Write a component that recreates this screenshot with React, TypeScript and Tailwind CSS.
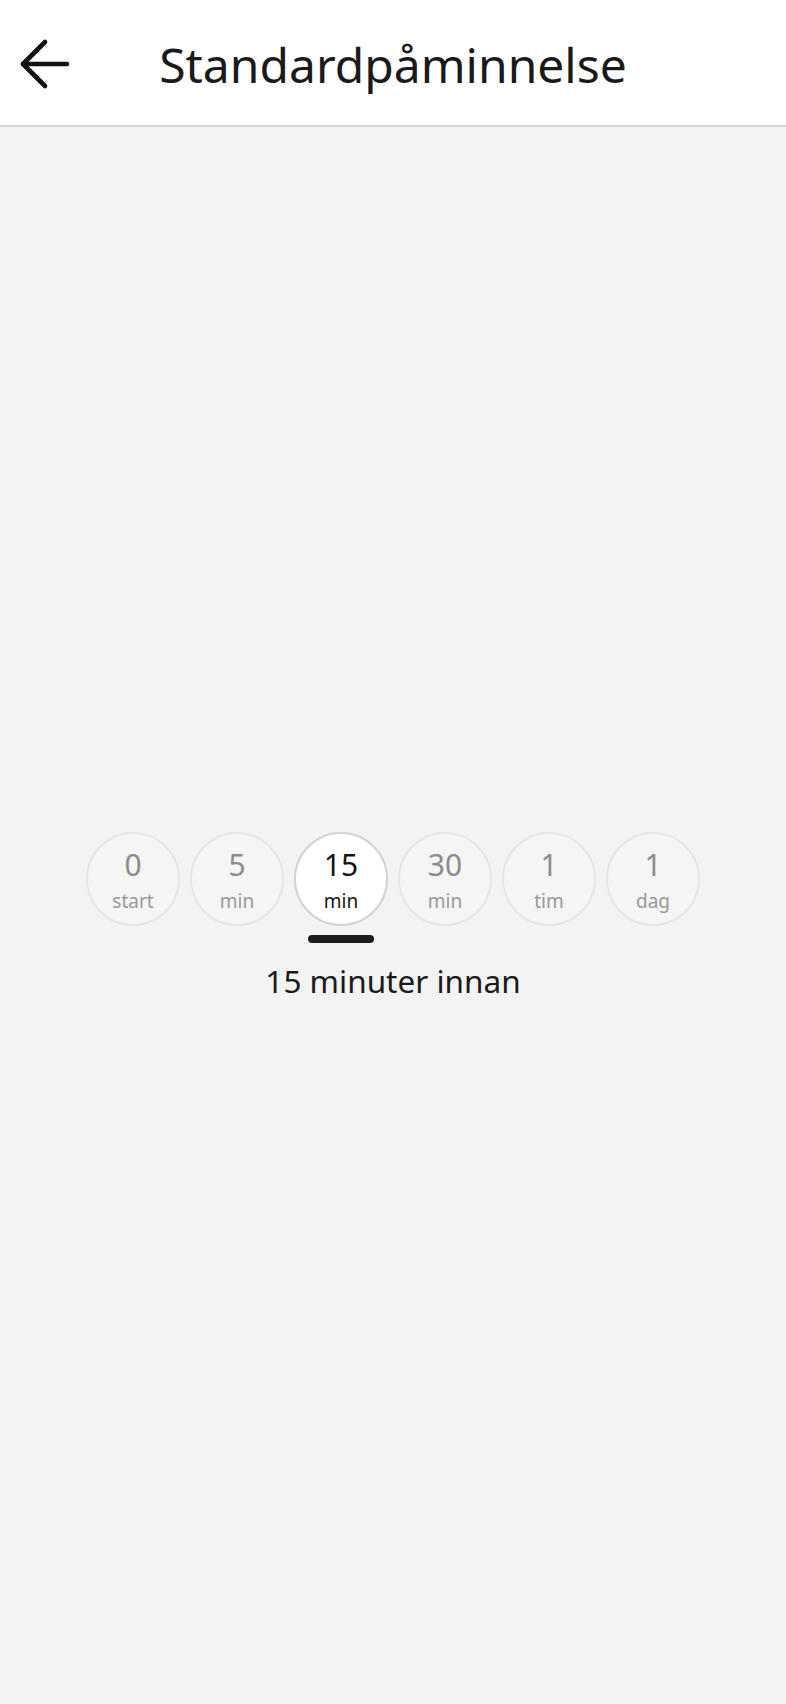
import React, { useState } from 'react';

const options = [
    { value: '0', unit: 'start', text: 'Vid start' },
    { value: '5', unit: 'min', text: '5 minuter innan' },
    { value: '15', unit: 'min', text: '15 minuter innan' },
    { value: '30', unit: 'min', text: '30 minuter innan' },
    { value: '1', unit: 'tim', text: '1 timme innan' },
    { value: '1', unit: 'dag', text: '1 dag innan' },
];

const App: React.FC = () => {
    const [selected, setSelected] = useState(2);

    return (
        <div className="min-h-screen flex flex-col bg-[#f3f3f3] font-['Noto_Sans',sans-serif]">
            <header className="h-[127px] grid grid-cols-[1fr_auto_1fr] items-center bg-white border-b-2 border-[#d6d6da]">
                <button className="ml-[18px] mt-[3px] w-[54px] h-[54px] flex items-center justify-center text-[#111]">
                    <svg width="54" height="54" viewBox="0 0 54 54" fill="none" stroke="currentColor" strokeWidth="4.6" strokeLinecap="round" strokeLinejoin="round">
                        <path d="M5 27h44" />
                        <path d="M27 5 5 27l22 22" />
                    </svg>
                </button>
                <h1 className="pt-[4px] text-[48px] leading-[60px] text-[#1a1a1a] whitespace-nowrap">Standardpåminnelse</h1>
                <div />
            </header>

            <main className="flex-1 flex flex-col items-center justify-center pt-[3px]">
                <div className="flex gap-[10px]">
                    {options.map((o, i) => {
                        const active = i === selected;
                        return (
                            <div key={i} className="flex flex-col items-center">
                                <button
                                    onClick={() => setSelected(i)}
                                    className={
                                        active
                                            ? 'w-[94px] h-[94px] rounded-full border-2 border-[#d2d2d2] bg-white flex flex-col items-center justify-center pt-[5px] text-[#141414]'
                                            : 'w-[94px] h-[94px] rounded-full border-2 border-[#e6e6e6] bg-[#f5f5f5] flex flex-col items-center justify-center pt-[5px] text-[#8c8c8c]'
                                    }
                                >
                                    <span className="text-[30px] leading-[36px]">{o.value}</span>
                                    <span className={active ? 'mt-1 text-[19px] leading-[28px] text-[#141414]' : 'mt-1 text-[19px] leading-[28px] text-[#999]'}>
                                        {o.unit}
                                    </span>
                                </button>
                                <div className={active ? 'mt-[9px] w-[66px] h-[8px] rounded-full bg-[#1c1c1c]' : 'mt-[9px] w-[66px] h-[8px]'} />
                            </div>
                        );
                    })}
                </div>
                <p className="mt-[16px] text-[31.5px] leading-[44px] text-[#1a1a1a]">{options[selected].text}</p>
            </main>
        </div>
    );
};

export default App;
